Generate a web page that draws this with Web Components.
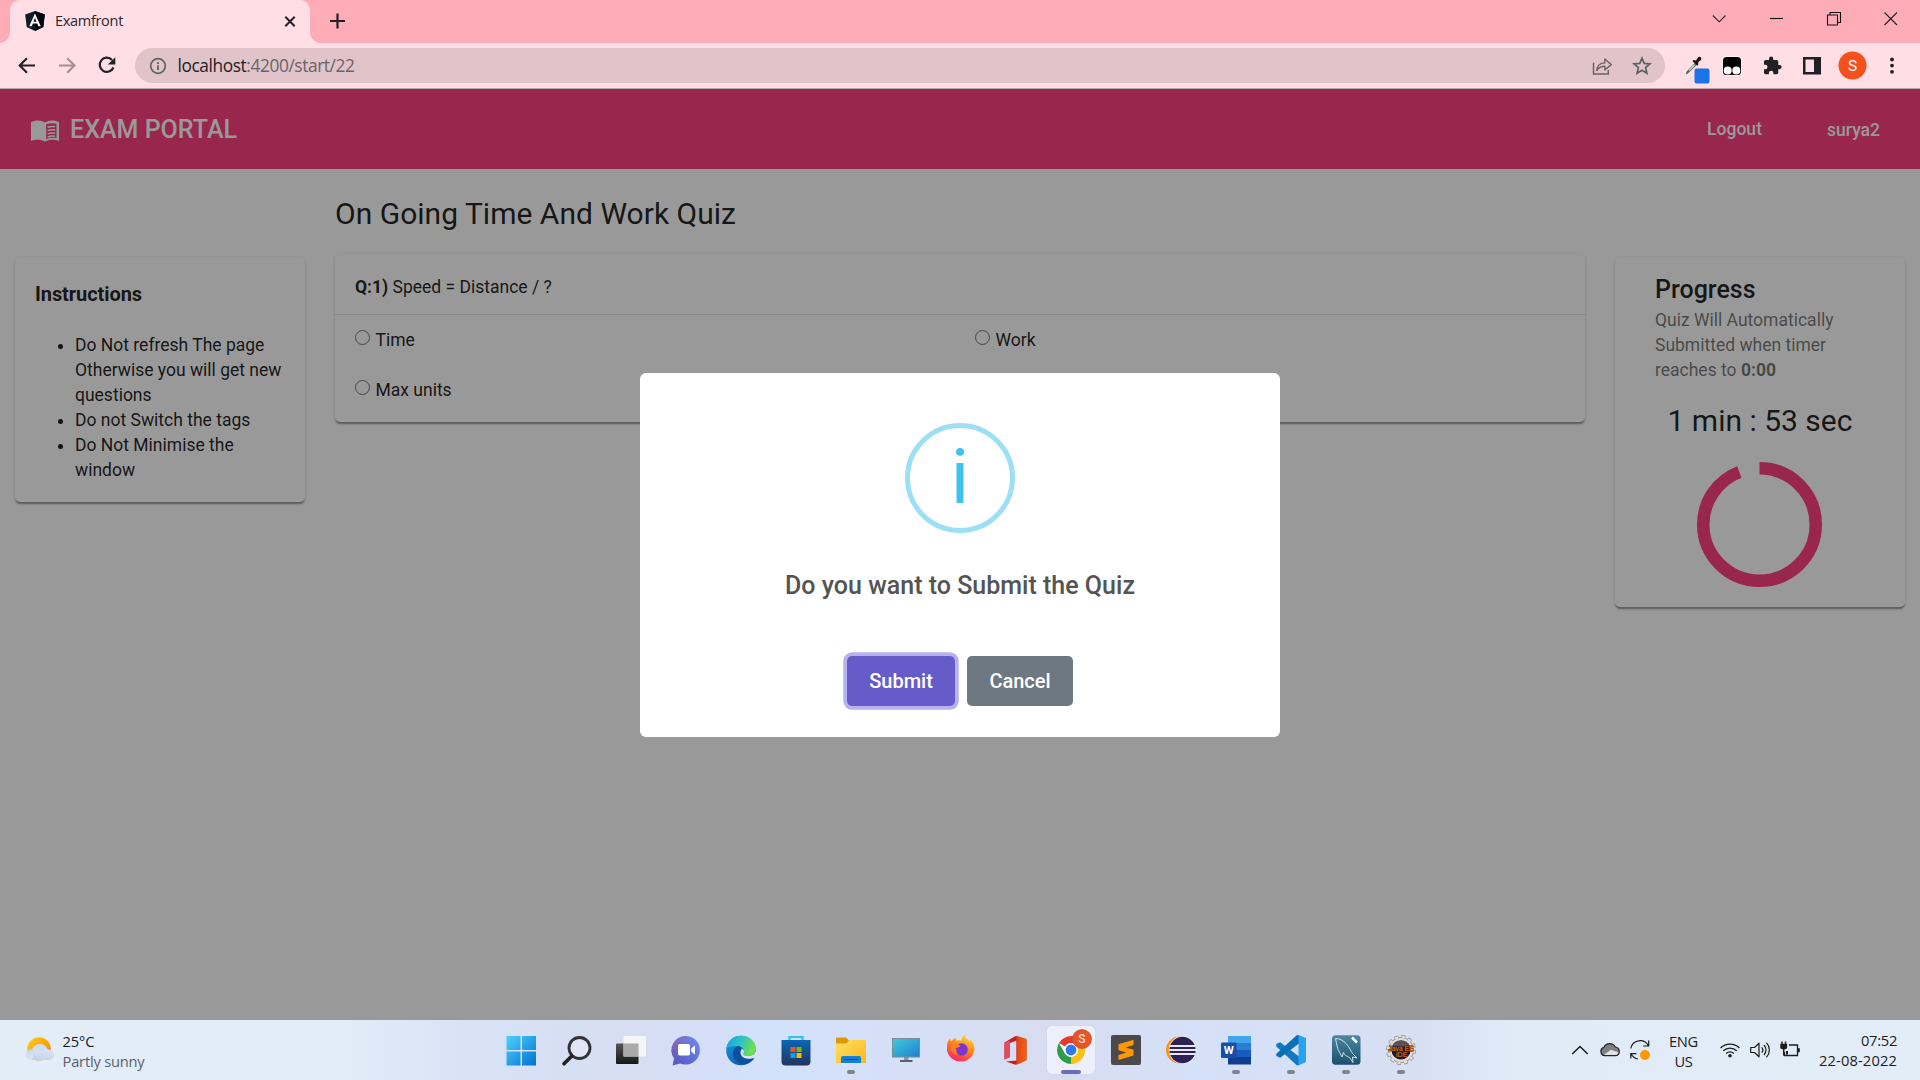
<!DOCTYPE html>
<html lang="en">
<head>
<meta charset="utf-8">
<title>Examfront</title>
<style>
html,body{margin:0;padding:0;width:1920px;height:1080px;overflow:hidden;background:#999}
</style>
</head>
<body>
<desktop-screen></desktop-screen>
<script>
const define = (name, html, setup) => customElements.define(name, class extends HTMLElement {
  constructor() { super(); this.attachShadow({ mode: 'open' }); }
  connectedCallback() {
    this.shadowRoot.innerHTML = html;
    if (setup) setup(this, this.shadowRoot);
  }
});

const ICONS = {
  angular: ['20 20', `<path d="M10 0 19.8 3.4 18.3 16 10 20 1.7 16 .2 3.4Z" fill="#111a26"/><path d="M10 0 19.8 3.4 18.3 16 10 20Z" fill="#02060e"/><path d="M10 2.6 4.2 15.3h2.5l1.2-2.8h4.3l1.2 2.8h2.4Zm0 4.3 1.6 3.8H8.4Z" fill="#fff"/>`],
  closeTab: ['20 20', `<path d="M5.3 5.8l9.4 9.4M14.7 5.8l-9.4 9.4" stroke="#202124" stroke-width="2" fill="none"/>`],
  plus: ['20 20', `<path d="M10.500 2.500v15M3 10h15" stroke="#202124" stroke-width="2.200" fill="none"/>`],
  chevron: ['20 20', `<path d="M3.8 6.5 10.300 12.800l6.200-6.300" stroke="#222" stroke-width="1.1" fill="none"/>`],
  min: ['20 20', `<path d="M4 9.500h13" stroke="#111" stroke-width="1.100"/>`],
  restore: ['20 20', `<path d="M3.500 6h10v10h-10zM6 6V3.500h10.500v10h-3" stroke="#111" stroke-width="1.100" fill="none"/>`],
  closeWin: ['20 20', `<path d="M3.500 3.500l12.500 12.500M16 3.500L3.500 16" stroke="#222" stroke-width="1.100" fill="none"/>`],
  back: ['40 40', `<path d="M28 19.500H13M20 12.200 12.700 19.500 20 26.800" stroke="#202124" stroke-width="2.100" fill="none"/>`],
  forward: ['40 40', `<path d="M12 19.500h15M20.200 12.200 27.500 19.500 20.200 26.800" stroke="#a28e93" stroke-width="2.100" fill="none"/>`],
  reload: ['40 40', `<path d="M25 13.900A7.100 7.100 0 1 0 26.400 21.500" stroke="#202124" stroke-width="2.200" fill="none"/><path d="M28.300 11.300v7.300h-7.500Z" fill="#202124"/>`],
  info: ['20 20', `<circle cx="10" cy="10" r="7.300" stroke="#5f6368" stroke-width="1.700" fill="none"/><path d="M9.100 9.200h1.800v4.700H9.100zM9.100 6.100h1.800v1.800H9.100z" fill="#5f6368"/>`],
  share: ['40 40', `<path d="M12.200 17.500H11.500v10.600h14.800v-4" stroke="#6b6469" stroke-width="1.500" fill="none"/><path d="M14.700 24.500c.5-5.200 3.700-7.500 8.100-7.600V13l6.500 5.600-6.500 5.300v-3.600c-3.600 0-5.900 1-8.100 4.200Z" stroke="#6b6469" stroke-width="1.400" stroke-linejoin="round" fill="none"/>`],
  star: ['40 40', `<path d="M20 12.200l2.200 5.200 5.700.5-4.300 3.700 1.300 5.600-4.900-3-4.900 3 1.300-5.600-4.300-3.700 5.700-.5Z" stroke="#5f6066" stroke-width="1.700" fill="none"/>`],
  dropper: ['40 40', `<path d="M14.400 28.400c-1-1.600.6-3.500 2-4.900l6-6.300 2 2-6.200 6c-1.500 1.400-2.200 2.500-3.800 3.200Z" fill="#55635a"/><path d="M17 24.500l5.500-5.700" stroke="#bce8c4" stroke-width="1.400"/><path d="M20.400 14.900l1.300-.9 2.300.5 2-3c1.200-1.600 4.100-.3 3.200 2.200l-3 2.600.1 2.300-1.200 1.100Z" fill="#1b1216"/><rect x="22.500" y="22.500" width="15" height="15" rx="2" fill="#1a73e8"/>`],
  tamper: ['40 40', `<rect x="10.300" y="10.300" width="19.500" height="19.500" rx="4" fill="#fff" opacity=".7"/><rect x="11" y="11" width="18" height="18" rx="3.600" fill="#020202"/><circle cx="15.700" cy="24.500" r="4" fill="#fff"/><circle cx="24.300" cy="24.500" r="4" fill="#fff"/>`],
  puzzle: ['40 40', `<path transform="translate(10.300 9.700) scale(.84)" d="M20.500 11H19V7c0-1.100-.9-2-2-2h-4V3.500a2.500 2.500 0 0 0-5 0V5H4c-1.100 0-2 .9-2 2v3.800h1.500a2.700 2.700 0 0 1 0 5.400H2V20c0 1.100.9 2 2 2h3.800v-1.500a2.700 2.700 0 0 1 5.400 0V22H17c1.100 0 2-.9 2-2v-4h1.500a2.500 2.500 0 0 0 0-5Z" fill="#202124"/>`],
  panel: ['40 40', `<path d="M11 11h18v17.500H11ZM13.500 13.500V26H22V13.500Z" fill="#202124" fill-rule="evenodd"/>`],
  avatar: ['40 40', `<circle cx="20.500" cy="19.500" r="14" fill="#f4511e"/><text x="20.500" y="25" text-anchor="middle" font-family="Roboto" font-size="15.500" fill="#fff">S</text>`],
  dots: ['40 40', `<circle cx="20" cy="13.500" r="1.900" fill="#202124"/><circle cx="20" cy="19.600" r="1.900" fill="#202124"/><circle cx="20" cy="25.800" r="1.900" fill="#202124"/>`],
  book: ['30 24', `<path d="M1 3.200C5.500.8 11 .8 15 3.600 19 .8 24.500.8 29 3.200V22c-4.500-1.800-10-1.600-14 .8C11 20.400 5.500 20.200 1 22ZM16.200 5.300v15c3.500-1.500 7-1.700 10.300-1.200V4.800c-3.500-1-7.300-.7-10.300.5Z" fill="#fff" fill-rule="evenodd"/><path d="M17.600 8.300c2.500-.9 5-1.100 7.600-.7M17.600 11.600c2.500-.9 5-1.100 7.600-.7M17.600 14.900c2.500-.9 5-1.100 7.600-.7M17.600 18c2.500-.9 5-1.100 7.600-.7" stroke="#fff" stroke-width="1.500" fill="none"/>`],
  weather: ['28 24', `<defs><linearGradient id="s" x2="1" y2="1"><stop stop-color="#ffd21a"/><stop offset="1" stop-color="#f57c00"/></linearGradient><linearGradient id="c" x2="0" y2="1"><stop stop-color="#dbe9fb"/><stop offset="1" stop-color="#aebfd9"/></linearGradient><linearGradient id="c2" x2="1" y2="1"><stop stop-color="#c5d5ea"/><stop offset="1" stop-color="#e9f1fa"/></linearGradient></defs><circle cx="13" cy="12" r="11.800" fill="url(#s)"/><circle cx="14" cy="15.500" r="8.500" fill="#cddff7"/><rect y="12.500" width="28" height="10.500" rx="5.250" fill="url(#c2)"/><path d="M8 15c2-2.500 7-2.500 9 1 2-3 8-3 11 1 0 4-2.500 6-6 6H6" fill="url(#c)" opacity=".55"/>`],
  windows: ['48 48', `<defs><linearGradient id="w" x2="1" y2="1"><stop stop-color="#4fd0ff"/><stop offset="1" stop-color="#0072d0"/></linearGradient></defs><path d="M9.500 10h14v14h-14zM25 10h14v14H25zM9.500 25.500h14v14h-14zM25 25.500h14v14H25z" fill="url(#w)"/>`],
  search: ['48 48', `<circle cx="27.500" cy="22" r="10.500" fill="#dfe6f6" stroke="#333" stroke-width="2.800"/><path d="M19.800 30 12 37.800" stroke="#222" stroke-width="3.600" stroke-linecap="round" fill="none"/>`],
  taskview: ['48 48', `<defs><linearGradient id="t" x2="0" y2="1"><stop stop-color="#555"/><stop offset="1" stop-color="#161616"/></linearGradient></defs><rect x="9" y="17.500" width="22.500" height="20.500" rx="1" fill="url(#t)"/><rect x="16.500" y="10" width="22.500" height="20.500" rx="1" fill="#f6f6f6" opacity=".93"/><path d="M16.500 17.500h15v13h-15Z" fill="#aaa"/>`],
  chat: ['48 48', `<defs><linearGradient id="m" x2="1" y2="1"><stop stop-color="#8e64a8"/><stop offset=".5" stop-color="#5b5fc7"/><stop offset="1" stop-color="#4b55c4"/></linearGradient><linearGradient id="m2" x1="1" x2="0" y2=".5"><stop stop-color="#7aa0ff" stop-opacity=".7"/><stop offset="1" stop-color="#7aa0ff" stop-opacity="0"/></linearGradient></defs><path d="M24 10a14.300 14.300 0 1 1-6 27.500l-7.500 2 1.500-7A14.300 14.300 0 0 1 24 10Z" fill="url(#m)"/><circle cx="24.300" cy="24" r="14" fill="url(#m2)"/><rect x="16" y="18" width="12" height="11.500" rx="1.800" fill="#fff"/><path d="M29.300 22.300l3.700-2.700v8.800l-3.700-2.600Z" fill="#fff"/>`],
  edge: ['48 48', `<defs><linearGradient id="e1" x2="1" y2=".3"><stop stop-color="#1a9fe0"/><stop offset=".5" stop-color="#2cc3c8"/><stop offset="1" stop-color="#6fe04c"/></linearGradient><linearGradient id="e2" x2=".5" y2="1"><stop stop-color="#1b9de2"/><stop offset="1" stop-color="#1060b5"/></linearGradient></defs><circle cx="24" cy="24.500" r="14.800" fill="url(#e2)"/><path d="M9.600 22C10.600 14 17 9.700 24 9.700c9 0 15 6.300 15 12.800 0 5.200-4 7.500-8.500 7.500-3 0-5-1.200-4.200-2.500 2-3-.5-7.500-5-7.500-5 0-9.800.7-11.700 2Z" fill="url(#e1)"/><path d="M21 20c-4 1.500-6 6-4.500 10.500 1.700 5 6.500 7.800 11.500 7.500 4-.5 7.600-2.900 9.500-6-4.300 2-9.800 2-12.500-1.500-2-2.700-2-5.500-.5-8.200-1-1.300-2-2-3.500-2.300Z" fill="#0c4f9c"/><path d="M24.500 23.500c-2 2.500-1 7 3 8.500 3.600 1.400 7.500.7 10.200-.5l1.800-3.500v-4c-1.500 4.500-5 6-9 6-3 0-5-1.200-4.200-2.500 1-1.500.8-3-.3-4.500Z" fill="#dbe4f7"/>`],
  store: ['48 48', `<defs><linearGradient id="st" x2="0" y2="1"><stop stop-color="#0c66b4"/><stop offset="1" stop-color="#21355f"/></linearGradient></defs><path d="M17.500 16v-5h13v5" stroke="#28c2f5" stroke-width="2.200" fill="none"/><path d="M9.500 14h29v21.500a4 4 0 0 1-4 4h-21a4 4 0 0 1-4-4Z" fill="url(#st)"/><path d="M18.500 21h5v5h-5z" fill="#f25022"/><path d="M24.500 21h5v5h-5z" fill="#7fba00"/><path d="M18.500 27h5v5h-5z" fill="#00a4ef"/><path d="M24.500 27h5v5h-5z" fill="#ffb900"/>`],
  files: ['48 48', `<defs><linearGradient id="f" x2="1" y2="1"><stop stop-color="#ffe069"/><stop offset="1" stop-color="#fcb717"/></linearGradient></defs><path d="M9 11.500h10l3 3h2V19H9Z" fill="#d99a06"/><path d="M9 17.500h10.500L22 14h15.500a1.500 1.500 0 0 1 1.500 1.500V37H9Z" fill="url(#f)"/><path d="M14 37v-5a2 2 0 0 1 2-2h16a2 2 0 0 1 2 2v5Z" fill="#1180d6"/><path d="M17.500 33.500h13" stroke="#074f91" stroke-width="1"/>`],
  monitor: ['48 48', `<defs><linearGradient id="mo" x2="1" y2="1"><stop stop-color="#40cdda"/><stop offset="1" stop-color="#1f7fd0"/></linearGradient></defs><path d="M22 30h4.500v5H22z" fill="#8c9299"/><rect x="10.500" y="12.500" width="27" height="18.500" fill="url(#mo)" stroke="#7b8c92"/><path d="M18 34h12.500v2H18z" fill="#59616a"/>`],
  firefox: ['48 48', `<defs><linearGradient id="ff" x1=".8" y1="0" x2=".3" y2="1"><stop stop-color="#ffe03a"/><stop offset=".45" stop-color="#ff8a16"/><stop offset="1" stop-color="#f5236f"/></linearGradient></defs><path d="M10 20c0-3 1.500-6 3-7.500l1.200 3C16 13 18 12 19 12c-.3 1.200 0 2 .6 2.700 1.700-.6 3.400-.5 4.900.1 0-2.500 1.500-5 3.300-6.300.3 4 3 5 5 7.300l.3-2.300c3 2.300 4.500 6.500 4.500 9.800A14 14 0 0 1 10 24.500Z" fill="url(#ff)"/><circle cx="24.500" cy="23.500" r="6.200" fill="#7a36cf"/><path d="M13 20.500c4-3 8.300-2.500 10.500-1-1.500 2.500-4 2-5 3 2 2.500-.5 4 3.500 6-5 1-9-3.500-9-8Z" fill="#ff7d1b"/>`],
  office: ['48 48', `<defs><linearGradient id="o" x2="1" y2="0"><stop stop-color="#e3401c"/><stop offset="1" stop-color="#ee6610"/></linearGradient></defs><path d="M12.500 16.500 23.500 10l11 3.300V34l-11 4.800-9.500-3.300 10.500-1V14.500L18 17v14l-5.500 2.500Z" fill="#c41e25"/><path d="M24.500 9.700 34.500 13v21.500l-10 4.300Z" fill="url(#o)"/><path d="M12.500 16.500 18 14.500V31l-5.500 2.500Z" fill="#e24a62"/>`],
  chrome: ['48 48', `<circle cx="24" cy="24" r="14" fill="#fff"/><path d="M24 24 11.900 17a14 14 0 0 1 24.200 0Z" fill="#e33b2e"/><path d="M24 17h12.100A14 14 0 0 1 24 38Z" fill="#fbc116"/><path d="M11.900 17 18 27.500l6 3.500L24 38A14 14 0 0 1 11.900 17Z" fill="#2d9d48"/><path d="M30 27.500 24 38a14 14 0 0 0 12.100-21H24Z" fill="#fbc116"/><circle cx="24" cy="24" r="7" fill="#fff"/><circle cx="24" cy="24" r="5.400" fill="#2f78ea"/><circle cx="35" cy="13" r="9.600" fill="#ea5326" stroke="#a9562f" stroke-width=".6"/><text x="35" y="17.300" text-anchor="middle" font-family="Roboto" font-size="12" font-weight="500" fill="#fbd9c8">S</text>`],
  sublime: ['48 48', `<rect x="9" y="9" width="30" height="30" rx="2" fill="#4a4a4a"/><path d="M16.500 18.300 31.500 13.800v5.100l-8 2.500 8 2.300v5.700l-15 4.700V29l7.800-2.500-7.800-2.300Z" fill="#ff9800"/>`],
  eclipse: ['48 48', `<circle cx="22.500" cy="24" r="13.500" fill="#f7941e"/><circle cx="25.500" cy="24" r="13.700" fill="#fff"/><circle cx="25.500" cy="24" r="13.200" fill="#2c2255"/><path d="M12.500 20h26M12 24h27M12.500 28h26" stroke="#e9e8f2" stroke-width="1.900"/>`],
  word: ['48 48', `<path d="M16 10h23v7H16z" fill="#41a5ee"/><path d="M16 17h23v7H16z" fill="#2b7cd3"/><path d="M16 24h23v7H16z" fill="#185abd"/><path d="M16 31h23v7.500H16z" fill="#103f91"/><rect x="9" y="16.500" width="15.500" height="15.500" rx="1.200" fill="#174da8"/><text x="16.700" y="28.300" text-anchor="middle" font-family="Roboto" font-weight="700" font-size="11.500" fill="#fff">W</text>`],
  vscode: ['48 48', `<path d="M32 30.500 13.200 16.300 9.300 18v2.500L30 39.500l2-.5Z" fill="#1079c0"/><path d="M32 17.500 13.200 31.700 9.300 30v-2.300L30 9l2 .3Z" fill="#0b70b5"/><path d="M31.500 9 39 12v24l-7.500 3.500Z" fill="#27a3ef"/>`],
  workbench: ['48 48', `<defs><linearGradient id="wb" x2="0" y2="1"><stop stop-color="#4d87a1"/><stop offset="1" stop-color="#1b506d"/></linearGradient></defs><rect x="10" y="9.300" width="28.500" height="29.500" rx="3.500" fill="url(#wb)"/><path d="M13.500 12.500c4 0 8 2 11 5.500 3 3.500 4.500 7 6 9.500l4.500 4.500-4.500-1 .5 5.500-3.500-5c-3-1.500-5-2-6-5l-1.500 4.500-2-4c-3-4-3.500-10-4.500-14.500Z" stroke="#dce9ef" stroke-width=".9" fill="none"/><path d="M30 11.500l5 5" stroke="#fff" stroke-width="2.500"/>`],
  java: ['48 48', `<circle cx="24" cy="24" r="12.600" fill="#e2dfdb" stroke="#77716d" stroke-width=".7"/><circle cx="24" cy="24" r="13.300" fill="none" stroke="#8d8884" stroke-width="3.200" stroke-dasharray="3.900 3.060"/><circle cx="24" cy="24" r="12.900" fill="none" stroke="#e2dfdb" stroke-width="2.600" stroke-dasharray="3.100 3.650" stroke-dashoffset="-.4"/><circle cx="24" cy="24" r="9.600" fill="#1c1830"/><path d="M15 20.500a9.600 9.600 0 0 1 18 0Z" fill="#5d5058"/><text x="24" y="24.500" text-anchor="middle" font-family="Liberation Sans" font-size="7" fill="#f0811c" stroke="#3a2115" stroke-width=".9" paint-order="stroke" textLength="25" lengthAdjust="spacingAndGlyphs">Java EE</text><text x="24.500" y="31" text-anchor="middle" font-family="Liberation Sans" font-size="7" fill="#f0811c">IDE</text>`],
  up: ['20 20', `<path d="M2.300 14 10 6.500l7.700 7.500" stroke="#1c1c1c" stroke-width="1.500" fill="none"/>`],
  cloud: ['20 20', `<path d="M4.800 15.700A4.300 4.300 0 0 1 4 7.300 6.300 6.300 0 0 1 15.300 7a4.400 4.400 0 0 1 .4 8.700Z" fill="#7d7f82"/><path d="M3 15.500 11 9.800l8.500 3c-.5 1.800-2 3-4 3Z" fill="#e3e3e5"/><path d="M4.800 15.700A4.300 4.300 0 0 1 4 7.300 6.300 6.300 0 0 1 15.300 7a4.400 4.400 0 0 1 .4 8.700Z" fill="none" stroke="#222" stroke-width="1.200"/>`],
  sync: ['20 20', `<path d="M.8 8.500A9.400 9.400 0 0 1 18.500 6M18.700.5V6h-5.500M.8 18.500v-4.800h5.500M1.200 14c1.800 3.300 3.800 4.700 6.800 5" stroke="#1c1c1c" stroke-width="1.200" fill="none"/><circle cx="15" cy="15" r="5" fill="#ff9800"/>`],
  wifi: ['20 20', `<path d="M.6 8a13.300 13.300 0 0 1 18.800 0M3.300 10.800a9.500 9.500 0 0 1 13.400 0M6.200 13.500a5.400 5.400 0 0 1 7.600 0" stroke="#1c1c1c" stroke-width="1.300" fill="none"/><circle cx="10" cy="15.800" r="1.800" fill="#1c1c1c"/>`],
  volume: ['20 20', `<path d="M.7 7.500h3.800L9 3.200v13.600l-4.500-4.300H.7ZM11.700 7.300a4 4 0 0 1 0 5.400M14 5a7.300 7.300 0 0 1 0 10M16.400 2.700a10.500 10.500 0 0 1 0 14.600" stroke="#1c1c1c" stroke-width="1.200" fill="none" stroke-linejoin="round"/>`],
  battery: ['20 20', `<path d="M9 5h8.500v10.500H4.500V12" stroke="#1c1c1c" stroke-width="1.300" fill="none"/><path d="M18 8.300h1.800v4H18zM.3 3.800h6.800v4c0 2-6.800 2-6.800 0zM1.300 1.600h1.400v3H1.300zM4.800 1.600h1.400v3H4.800zM3 9h1.500v6.500H3zM6 11h2v3.500H6z" fill="#1c1c1c"/>`]
};

define('ui-icon', `<style>:host{display:block;flex:none}svg{display:block;overflow:visible}</style>`, (el, root) => {
  const [box, body] = ICONS[el.getAttribute('name')];
  const [w, h] = box.split(' ');
  root.innerHTML += `<svg width="${w}" height="${h}" viewBox="0 0 ${w} ${h}">${body}</svg>`;
});

/* Tracks a label so that its line takes the given number of pixels. */
define('fit-text', `<style>:host{display:block;white-space:nowrap;flex:none}span{display:inline-block}</style><span><slot></slot></span>`, (el, root) => {
  const span = root.querySelector('span');
  const target = +el.getAttribute('w');
  if (!target) return;
  const gap = (target - span.getBoundingClientRect().width) / el.textContent.length;
  span.style.letterSpacing = gap.toFixed(3) + 'px';
});

define('tab-strip', `<style>
:host{display:flex;height:43px;background:#ffacb9;color:#2c2430;font:14.500px/34px "Open Sans",sans-serif}
.tab{position:relative;display:flex;align-items:center;box-sizing:border-box;width:300px;height:43px;margin-left:10px;padding:0 10px 1px 15px;background:#ffdfe5;border-radius:10px 10px 0 0}
.tab::before,.tab::after{content:"";position:absolute;bottom:0;width:10px;height:10px}
.tab::before{left:-10px;background:radial-gradient(circle at 0 0,transparent 9.500px,#ffdfe5 10px)}
.tab::after{right:-10px;background:radial-gradient(circle at 100% 0,transparent 9.500px,#ffdfe5 10px)}
fit-text{margin:0 auto 0 10px}
.plus{margin:11px 0 0 17px}
.win{display:flex;margin-left:auto;height:37px}
.win div{width:57.500px;display:grid;place-items:center}
</style>
<div class="tab"><ui-icon name="angular"></ui-icon><fit-text w="68">Examfront</fit-text><ui-icon name="closeTab"></ui-icon></div>
<ui-icon class="plus" name="plus"></ui-icon>
<div class="win"><div><ui-icon name="chevron"></ui-icon></div><div><ui-icon name="min"></ui-icon></div><div><ui-icon name="restore"></ui-icon></div><div><ui-icon name="closeWin"></ui-icon></div></div>`);

define('browser-toolbar', `<style>
:host{display:flex;align-items:center;box-sizing:border-box;height:46px;padding:0 8px 0 7px;background:#ffdfe5;border-bottom:1px solid #b7a9ad}
.url{flex:1;display:flex;align-items:center;height:35px;margin:0 7px 0 8px;border-radius:18px;background:#e0c4ca;box-sizing:border-box;padding:0 3px 0 12.500px;color:#69636a;font:17.300px/34px "Open Sans",sans-serif}
b{font-weight:400;color:#202124}
fit-text{margin:0 auto 0 10px}
</style>
<ui-icon name="back"></ui-icon><ui-icon name="forward"></ui-icon><ui-icon name="reload"></ui-icon>
<div class="url"><ui-icon name="info"></ui-icon><fit-text w="177"><b>localhost</b>:4200/start/22</fit-text><ui-icon name="share"></ui-icon><ui-icon name="star"></ui-icon></div>
<ui-icon name="dropper"></ui-icon><ui-icon name="tamper"></ui-icon><ui-icon name="puzzle"></ui-icon><ui-icon name="panel"></ui-icon><ui-icon name="avatar"></ui-icon><ui-icon name="dots"></ui-icon>`);

define('portal-header', `<style>
:host{display:flex;align-items:center;box-sizing:border-box;height:80px;padding:0 40px 0 30px;background:#ff4081;color:#fff;font:500 17.500px/25px Roboto,sans-serif}
.name{font-size:25px;margin:0 auto 0 10px}
.out{margin-right:65px}
.user{margin-top:2px}
ui-icon{margin-top:3px}
</style>
<ui-icon name="book"></ui-icon><fit-text class="name" w="167">EXAM PORTAL</fit-text><fit-text class="out" w="55">Logout</fit-text><fit-text class="user" w="53">surya2</fit-text>`);

define('mat-card', `<style>
:host{display:block;box-sizing:border-box;background:#fff;border-radius:5px;box-shadow:0 2.500px 1.250px -1.250px rgba(0,0,0,.2),0 1.250px 1.250px rgba(0,0,0,.14),0 1.250px 3.750px rgba(0,0,0,.12)}
</style><slot></slot>`);

define('instruction-card', `<style>
:host{display:block}
mat-card{height:245px;padding:20px}
h3{margin:7px 0 29px;font:700 20px/20px Roboto,sans-serif}
h3+ul{margin:0;padding:0 0 0 40px}
</style>
<mat-card><h3><fit-text w="107">Instructions</fit-text></h3><ul><li>Do Not refresh The page<br>Otherwise you will get new<br>questions</li><li>Do not Switch the tags</li><li>Do Not Minimise the<br>window</li></ul></mat-card>`);

define('quiz-option', `<style>
:host{display:flex;height:50px}
i{width:13px;height:13px;margin:0 5.500px 0 0;border:1.250px solid #767676;border-radius:50%;background:#fff}
span{margin-top:-2px;line-height:25px}
</style><i></i><span><slot></slot></span>`);

define('question-card', `<style>
:host{display:block}
mat-card{height:168px}
.q{box-sizing:border-box;height:61px;padding:21px 20px 0;border-bottom:1px solid rgba(0,0,0,.12)}
.o{display:grid;grid-template-columns:620px 1fr;padding:15px 20px 0}
</style>
<mat-card><div class="q"><b>Q:1)</b> Speed = Distance / ?</div><div class="o"><quiz-option>Time</quiz-option><quiz-option>Work</quiz-option><quiz-option>Max units</quiz-option></div></mat-card>`);

define('progress-card', `<style>
:host{display:block}
mat-card{height:350px;padding:20px 20px 0 40px}
h2{margin:0;font:500 25px/25px Roboto,sans-serif}
p{margin:6px 0 0;color:rgba(0,0,0,.54)}
.t{margin:18px 20px 0 0;text-align:center;font-size:30px;line-height:40px}
svg{display:block;margin:21px 0 0 42px}
</style>
<mat-card><h2>Progress</h2><p>Quiz Will Automatically<br>Submitted when timer<br>reaches to <b>0:00</b></p><div class="t">1 min : 53 sec</div>
<svg width="125" height="125" viewBox="0 0 125 125"><circle cx="62.500" cy="62.500" r="56.250" fill="none" stroke="#ff4081" stroke-width="12.500" pathLength="120" stroke-dasharray="113 7" transform="rotate(-90 62.500 62.500)"/></svg></mat-card>`);

define('submit-dialog', `<style>
:host{display:flex;flex-direction:column;align-items:center;box-sizing:border-box;width:640px;height:364px;padding-top:50px;background:#fff;border-radius:6px;color:#545454;font-family:Roboto,sans-serif}
.i{display:grid;place-items:center;box-sizing:border-box;width:110px;height:110px;border:5px solid #9de0f6;border-radius:50%;color:#3fc3ee;font-size:76px;line-height:99px}
h2{margin:35px 0 0;font:500 25px/36px Roboto,sans-serif}
.b{display:flex;gap:12px;margin:52px 0 0}
.b div{display:grid;place-items:center;height:50px;border-radius:5px;color:#fff;font:500 20px/24px Roboto,sans-serif}
.s{width:108px;background:#665cc9;box-shadow:0 0 0 3.750px #b7b2ef}
.c{width:106px;background:#6e7881}
</style>
<div class="i">i</div><h2><fit-text w="350">Do you want to Submit the Quiz</fit-text></h2><div class="b"><div class="s">Submit</div><div class="c">Cancel</div></div>`);

define('exam-page', `<style>
:host{display:block;position:relative;height:931px;overflow:hidden;background:#fff;color:rgba(0,0,0,.87);font:17.500px/25px Roboto,sans-serif}
.g{display:grid;grid-template-columns:290px 1250px 290px;column-gap:30px;padding:0 15px;align-items:start}
instruction-card,progress-card{margin-top:88px}
h1{margin:25px 0 20px;font:400 30px/40px Roboto,sans-serif}
.shade{position:absolute;inset:0;display:flex;align-items:center;justify-content:center;background:rgba(0,0,0,.4)}
</style>
<portal-header></portal-header>
<div class="g"><instruction-card></instruction-card><div><h1><fit-text w="401">On Going Time And Work Quiz</fit-text></h1><question-card></question-card></div><progress-card></progress-card></div>
<div class="shade"><submit-dialog></submit-dialog></div>`);

define('task-item', `<style>
:host{display:grid;justify-items:center;width:55px;height:48px;position:relative}
:host([active]) ui-icon{background:#edf0fa;border-radius:5px;box-shadow:0 0 1px #b9c0d6}
u{position:absolute;bottom:0;width:8px;height:4px;border-radius:2px;background:#80838c}
:host([active]) u{width:20px;background:#6670b8}
:host(:not([open])) u{display:none}
</style>`, (el, root) => { root.innerHTML += `<ui-icon name="${el.getAttribute('icon')}"></ui-icon><u></u>`; });

define('task-bar', `<style>
:host{display:flex;box-sizing:border-box;height:60px;padding:6px 0 0;background:linear-gradient(90deg,#e2edf8 0,#e1ecf8 18%,#d8e3f7 24%,#d7ddf3 33%,#d3e1fa 39%,#d5e1f9 45%,#d8dcf0 55%,#d5e1f8 62%,#d8dff3 74%,#e0ebf7 79%,#e2edf8 100%);color:#1c1c1c;font:14.700px/20px "Open Sans",sans-serif}
.w{display:flex;width:467px;padding-left:26px;box-sizing:border-box}
.w ui-icon{margin-top:11px}
.w div{margin:5px 0 0 8.500px}
.sub{color:#5b6168}
.apps{display:flex;margin-left:26px}
.tray{display:flex;margin-left:auto;padding-right:23px}
.tray ui-icon{margin:14px 10px 0 0}
.tray ui-icon:nth-of-type(6){margin-right:0}
.l{margin:5px 23px 0 9px;display:grid;align-content:start;justify-items:center;width:28px}
.d{margin:4px 0 0 19px;display:grid;align-content:start;justify-items:end}
</style>
<div class="w"><ui-icon name="weather"></ui-icon><div><fit-text w="32">25°C</fit-text><fit-text class="sub" w="82">Partly sunny</fit-text></div></div><div class="apps">
<task-item icon="windows"></task-item><task-item icon="search"></task-item><task-item icon="taskview"></task-item><task-item icon="chat"></task-item><task-item icon="edge"></task-item><task-item icon="store"></task-item><task-item icon="files" open></task-item><task-item icon="monitor"></task-item><task-item icon="firefox"></task-item><task-item icon="office"></task-item><task-item icon="chrome" open active></task-item><task-item icon="sublime"></task-item><task-item icon="eclipse"></task-item><task-item icon="word" open></task-item><task-item icon="vscode" open></task-item><task-item icon="workbench" open></task-item><task-item icon="java" open></task-item></div>
<div class="tray"><ui-icon name="up"></ui-icon><ui-icon name="cloud"></ui-icon><ui-icon name="sync"></ui-icon><div class="l"><fit-text w="29">ENG</fit-text><fit-text w="18">US</fit-text></div><ui-icon name="wifi"></ui-icon><ui-icon name="volume"></ui-icon><ui-icon name="battery"></ui-icon><div class="d"><fit-text w="36">07:52</fit-text><fit-text w="78">22-08-2022</fit-text></div></div>`);

define('desktop-screen', `<style>:host{display:flex;flex-direction:column;width:1920px;height:1080px}</style>
<tab-strip></tab-strip><browser-toolbar></browser-toolbar><exam-page></exam-page><task-bar></task-bar>`);
</script>
</body>
</html>
